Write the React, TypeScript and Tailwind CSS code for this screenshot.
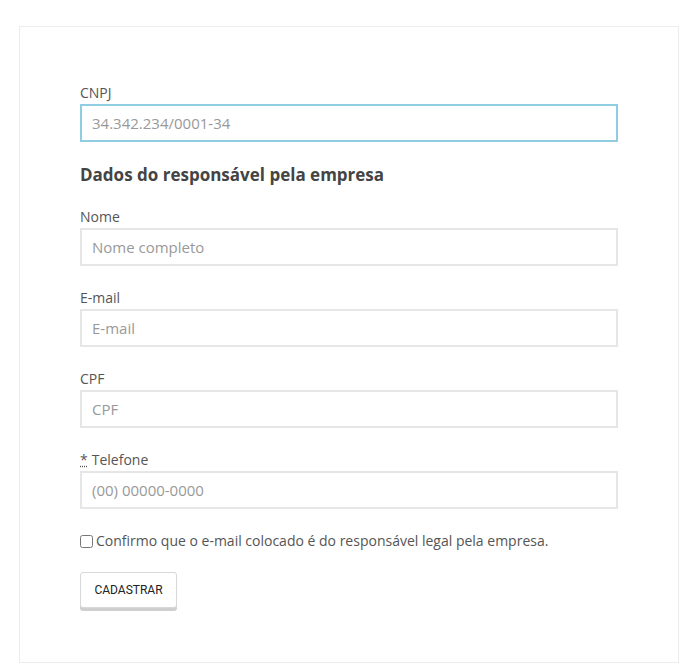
import type { ReactNode } from 'react';

const font = { fontFamily: '"Open Sans", "Noto Sans", sans-serif' };

function Field({ label, placeholder, required, value, focused }: { label: ReactNode; placeholder?: string; required?: boolean; value?: string; focused?: boolean }) {
  return (
    <div className="flex flex-col">
      <label className="mb-px h-5 text-[14px] leading-5 text-[#555]">
        {required && <abbr title="obrigatório" className="mr-1 no-underline [text-decoration:underline_dotted]">*</abbr>}
        {label}
      </label>
      <input
        readOnly
        placeholder={placeholder}
        defaultValue={value}
        className={`h-[38px] w-full border-2 bg-white px-[10px] text-[15px] text-[#999] outline-none placeholder:text-[#999] ${focused ? 'border-[#90cde2]' : 'border-[#e6e6e6]'}`}
      />
    </div>
  );
}

export default function App() {
  return (
    <div className="min-h-[672px] bg-white pt-[26px] pl-[19px] pr-[11px] pb-[9px]" style={font}>
      <div className="border border-[#ececec] px-[60px] pt-[56px] pb-[54px]">
        <Field label="CNPJ" placeholder="34.342.234/0001-34" focused />
        <h3 className="mt-[21px] mb-[20px] text-[17px] font-bold leading-6 text-[#444]">Dados do responsável pela empresa</h3>
        <div className="flex flex-col gap-[22px]">
          <Field label="Nome" placeholder="Nome completo" />
          <Field label="E-mail" placeholder="E-mail" />
          <Field label="CPF" placeholder="CPF" />
          <Field label="Telefone" placeholder="(00) 00000-0000" required />
        </div>
        <label className="mt-[22px] flex items-center gap-[3px] text-[14px] leading-5 text-[#555]">
          <input type="checkbox" className="m-0 h-[13px] w-[13px]" />
          Confirmo que o e-mail colocado é do responsável legal pela empresa.
        </label>
        <button
          className="mt-[21px] h-[36px] w-[97px] rounded-[3px] border border-[#d8d8d8] bg-white text-[12px] font-normal text-[#222] shadow-[0_3px_0_#cfcfcf]"
          style={{ fontFamily: 'Roboto, "Liberation Sans", sans-serif' }}
        >
          CADASTRAR
        </button>
      </div>
    </div>
  );
}
